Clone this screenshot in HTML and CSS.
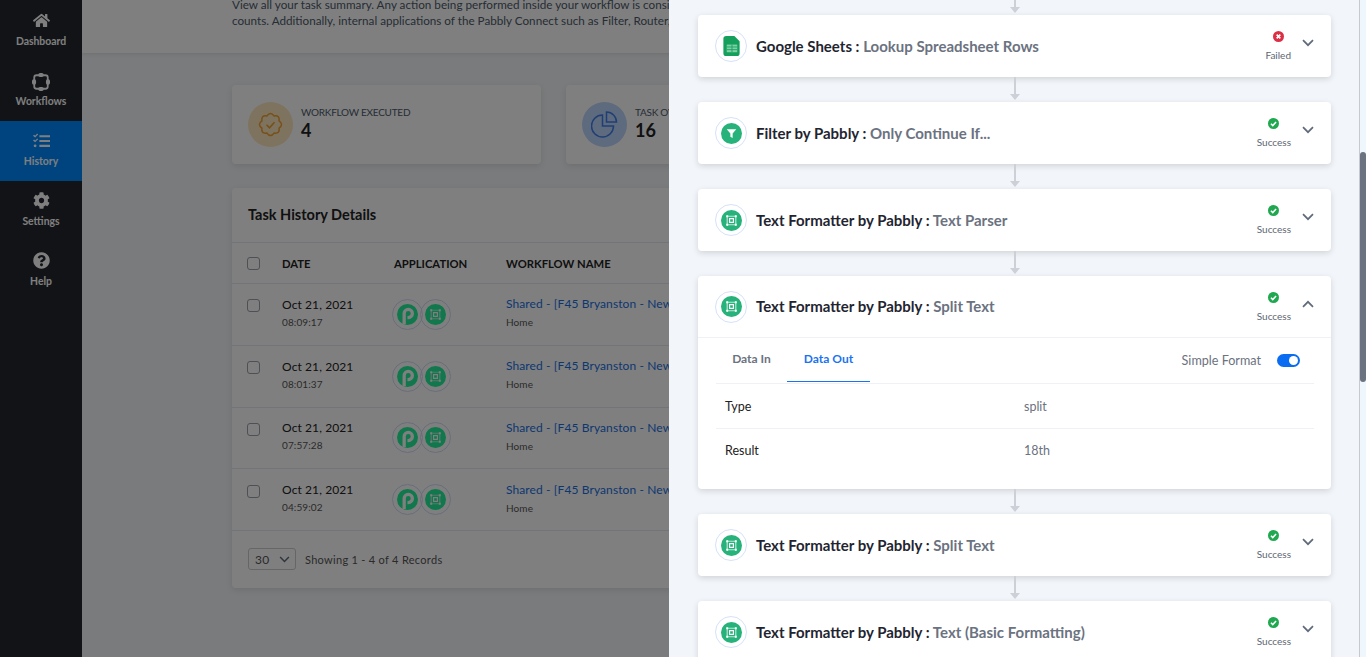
FILE: index.html
```html
<!DOCTYPE html>
<html lang="en">
<head>
  <meta charset="UTF-8">
  <title>Task History</title>
  <link rel="stylesheet" href="styles.css">
</head>
<body>
  <!-- shared icons -->
  <svg class="defs" width="0" height="0">
    <symbol id="i-formatter" viewBox="0 0 22 22">
      <circle cx="11" cy="11" r="11" fill="currentColor"/>
      <path d="M6.500 6.500h9v9h-9z" fill="none" stroke="#bfead8" stroke-width="1.200"/>
      <path d="M9 9h4v4H9z" fill="none" stroke="#fff" stroke-width="1.200"/>
      <path d="M5.500 5.500h2v2h-2zM14.500 5.500h2v2h-2zM5.500 14.500h2v2h-2zM14.500 14.500h2v2h-2z" fill="#fff"/>
    </symbol>
    <symbol id="i-pabbly" viewBox="0 0 22 22">
      <circle cx="11" cy="11" r="11" fill="currentColor"/>
      <path d="M7.500 21V10a4.300 4.300 0 1 1 4.300 4.300H11" fill="none" stroke="#fff" stroke-width="3.400"/>
    </symbol>
    <symbol id="i-arrow" viewBox="0 0 10 25">
      <path d="M4 0h2v18H4z" fill="#cdd1d7"/>
      <path d="M0 17h10l-5 6z" fill="#cdd1d7"/>
    </symbol>
    <symbol id="i-success" viewBox="0 0 12 12">
      <circle cx="6" cy="6" r="6" fill="#1fa850"/>
      <path d="M3.200 6.200l2 2 3.600-3.800" fill="none" stroke="#fff" stroke-width="1.700"/>
    </symbol>
    <symbol id="i-failed" viewBox="0 0 12 12">
      <circle cx="6" cy="6" r="6" fill="#dc2f45"/>
      <path d="M4 4l4 4M8 4l-4 4" fill="none" stroke="#fff" stroke-width="1.800"/>
    </symbol>
    <symbol id="i-chevron" viewBox="0 0 12 8">
      <path d="M1 1.200l5 5 5-5" fill="none" stroke="#5f6b7a" stroke-width="1.700"/>
    </symbol>
  </svg>

  <!-- sidebar -->
  <nav class="sidebar">
    <a class="nav-item">
      <svg class="nav-icon" viewBox="0 0 576 512"><path d="M280.37 148.26L96 300.11V464a16 16 0 0 0 16 16l112.06-.29a16 16 0 0 0 15.92-16V368a16 16 0 0 1 16-16h64a16 16 0 0 1 16 16v95.64a16 16 0 0 0 16 16.05L464 480a16 16 0 0 0 16-16V300L295.67 148.26a12.19 12.19 0 0 0-15.3 0zM571.6 251.47L488 182.56V44.05a12 12 0 0 0-12-12h-56a12 12 0 0 0-12 12v72.61L318.47 43a48 48 0 0 0-61 0L4.34 251.47a12 12 0 0 0-1.6 16.9l25.5 31A12 12 0 0 0 45.15 301l235.22-193.74a12.19 12.19 0 0 1 15.3 0L530.9 301a12 12 0 0 0 16.9-1.6l25.5-31a12 12 0 0 0-1.7-16.93z"/></svg>
      <span>Dashboard</span>
    </a>
    <a class="nav-item">
      <svg class="nav-icon large" viewBox="0 0 20 20"><rect x="2.500" y="2.500" width="15" height="15" rx="2.500" fill="none" stroke="currentColor" stroke-width="2"/><rect x="7" y="0" width="6" height="4.500" rx="2"/><rect x="7" y="15.500" width="6" height="4.500" rx="2"/><rect x="0" y="7" width="4.500" height="6" rx="2"/><rect x="15.500" y="7" width="4.500" height="6" rx="2"/></svg>
      <span>Workflows</span>
    </a>
    <a class="nav-item active">
      <svg class="nav-icon" viewBox="0 0 16 14"><path d="M6 2h10v2H6zM6 6.500h10v2H6zM6 11h10v2H6zM0 2.500l1-1 1 1L4 .5l.8.8L2 4.200zM0 7l1-1 1 1 2-2 .8.8L2 8.700z"/><circle cx="2" cy="12" r="1.300"/></svg>
      <span>History</span>
    </a>
    <a class="nav-item">
      <svg class="nav-icon" viewBox="0 0 512 512"><path d="M487.4 315.7l-42.6-24.6c4.3-23.2 4.3-47 0-70.2l42.6-24.6c4.9-2.8 7.1-8.6 5.5-14-11.1-35.6-30-67.8-54.7-94.6-3.8-4.1-10-5.1-14.8-2.3L380.8 110c-17.9-15.4-38.5-27.3-60.8-35.1V25.8c0-5.6-3.9-10.5-9.4-11.7-36.7-8.2-74.3-7.8-109.2 0-5.5 1.2-9.4 6.1-9.4 11.7V75c-22.2 7.9-42.8 19.8-60.8 35.1L88.7 85.5c-4.9-2.8-11-1.9-14.8 2.3-24.7 26.7-43.6 58.9-54.7 94.6-1.7 5.4.6 11.2 5.5 14L67.3 221c-4.3 23.2-4.3 47 0 70.2l-42.6 24.6c-4.9 2.8-7.1 8.6-5.5 14 11.1 35.6 30 67.8 54.7 94.6 3.8 4.1 10 5.1 14.8 2.3l42.6-24.6c17.9 15.4 38.5 27.3 60.8 35.1v49.2c0 5.6 3.9 10.5 9.4 11.7 36.7 8.2 74.3 7.8 109.2 0 5.5-1.2 9.4-6.1 9.4-11.7v-49.2c22.2-7.9 42.8-19.8 60.8-35.1l42.6 24.6c4.9 2.8 11 1.9 14.8-2.3 24.7-26.7 43.6-58.9 54.7-94.6 1.5-5.5-.7-11.3-5.6-14.1zM256 336c-44.1 0-80-35.9-80-80s35.9-80 80-80 80 35.9 80 80-35.9 80-80 80z"/></svg>
      <span>Settings</span>
    </a>
    <a class="nav-item">
      <svg class="nav-icon" viewBox="0 0 512 512"><path d="M504 256c0 136.997-111.043 248-248 248S8 392.997 8 256C8 119.083 119.043 8 256 8s248 111.083 248 248zM262.655 90c-54.497 0-89.255 22.957-116.549 63.758-3.536 5.286-2.353 12.415 2.715 16.258l34.699 26.31c5.205 3.947 12.621 3.008 16.665-2.122 17.864-22.658 30.113-35.797 57.303-35.797 20.429 0 45.698 13.148 45.698 32.958 0 14.976-12.363 22.667-32.534 33.976C247.128 238.528 216 254.941 216 296v4c0 6.627 5.373 12 12 12h56c6.627 0 12-5.373 12-12v-1.333c0-28.462 83.186-29.647 83.186-106.667 0-58.002-60.165-102-116.531-102zM256 338c-25.365 0-46 20.635-46 46 0 25.364 20.635 46 46 46s46-20.636 46-46c0-25.365-20.635-46-46-46z"/></svg>
      <span>Help</span>
    </a>
  </nav>

  <!-- page behind the drawer -->
  <main class="main">
    <header class="intro">
      <p>View all your task summary. Any action being performed inside your workflow is considered as a task and it</p>
      <p>counts. Additionally, internal applications of the Pabbly Connect such as Filter, Router, Delay are free.</p>
    </header>

    <section class="stats">
      <div class="stat-card">
        <div class="stat-icon amber">
          <svg width="25" height="25" viewBox="0 0 25 25" fill="none" stroke="#f0a030" stroke-width="1.500"><path d="M21.090 8.940Q26 12.500 21.090 16.060Q22.050 22.050 16.060 21.090Q12.500 26 8.940 21.090Q2.950 22.050 3.910 16.060Q-1 12.500 3.910 8.940Q2.950 2.950 8.940 3.910Q12.500 -1 16.060 3.910Q22.050 2.950 21.090 8.940z"/><path d="M8.500 12.800l3 3 5-5.500" stroke-width="1.600"/></svg>
        </div>
        <div>
          <div class="stat-label">WORKFLOW EXECUTED</div>
          <div class="stat-value">4</div>
        </div>
      </div>
      <div class="stat-card">
        <div class="stat-icon blue">
          <svg width="27" height="27" viewBox="0 0 27 27" fill="none" stroke="#3f7fe8" stroke-width="1.500"><path d="M11.500 4a11 11 0 1 0 11 11h-11z"/><path d="M15.500 1a10 10 0 0 1 10 10h-10z"/></svg>
        </div>
        <div>
          <div class="stat-label">TASK OVERVIEW</div>
          <div class="stat-value">16</div>
        </div>
      </div>
    </section>

    <section class="table-card">
      <h2 class="table-title">Task History Details</h2>
      <div class="row head">
        <span class="check"></span>
        <span>DATE</span>
        <span>APPLICATION</span>
        <span>WORKFLOW NAME</span>
      </div>
      <div class="row">
        <span class="check"></span>
        <div class="cell"><div class="date">Oct 21, 2021</div><div class="sub">08:09:17</div></div>
        <div class="apps">
          <span class="app"><svg><use href="#i-pabbly"/></svg></span><span class="app"><svg><use href="#i-formatter"/></svg></span>
        </div>
        <div class="cell"><div class="wf">Shared - [F45 Bryanston - New Member Onboarding]</div><div class="sub home">Home</div></div>
      </div>
      <div class="row">
        <span class="check"></span>
        <div class="cell"><div class="date">Oct 21, 2021</div><div class="sub">08:01:37</div></div>
        <div class="apps">
          <span class="app"><svg><use href="#i-pabbly"/></svg></span><span class="app"><svg><use href="#i-formatter"/></svg></span>
        </div>
        <div class="cell"><div class="wf">Shared - [F45 Bryanston - New Member Onboarding]</div><div class="sub home">Home</div></div>
      </div>
      <div class="row">
        <span class="check"></span>
        <div class="cell"><div class="date">Oct 21, 2021</div><div class="sub">07:57:28</div></div>
        <div class="apps">
          <span class="app"><svg><use href="#i-pabbly"/></svg></span><span class="app"><svg><use href="#i-formatter"/></svg></span>
        </div>
        <div class="cell"><div class="wf">Shared - [F45 Bryanston - New Member Onboarding]</div><div class="sub home">Home</div></div>
      </div>
      <div class="row">
        <span class="check"></span>
        <div class="cell"><div class="date">Oct 21, 2021</div><div class="sub">04:59:02</div></div>
        <div class="apps">
          <span class="app"><svg><use href="#i-pabbly"/></svg></span><span class="app"><svg><use href="#i-formatter"/></svg></span>
        </div>
        <div class="cell"><div class="wf">Shared - [F45 Bryanston - New Member Onboarding]</div><div class="sub home">Home</div></div>
      </div>
      <div class="table-foot">
        <div class="page-size"><span>30</span><svg width="11" height="7"><use href="#i-chevron"/></svg></div>
        <span>Showing 1 - 4 of 4 Records</span>
      </div>
    </section>
  </main>

  <div class="overlay"></div>

  <!-- task drawer -->
  <aside class="drawer">
    <svg class="arrow first"><use href="#i-arrow"/></svg>

    <div class="step">
      <div class="step-head">
        <span class="step-icon">
          <svg width="21" height="21" viewBox="0 0 22 22"><path d="M5.500 0H14l5.500 5.500V18a3 3 0 0 1-3 3h-11a3 3 0 0 1-3-3V3a3 3 0 0 1 3-3z" fill="#14a05c"/><path d="M6 9h11v8H6z" fill="#7fd0a6"/><path d="M6 11.500h11M6 14.300h11M11.500 9v8" stroke="#14a05c" stroke-width=".9"/></svg>
        </span>
        <div class="step-title">Google Sheets : <em>Lookup Spreadsheet Rows</em></div>
        <div class="status"><svg><use href="#i-failed"/></svg><span>Failed</span></div>
        <svg class="chevron"><use href="#i-chevron"/></svg>
      </div>
    </div>
    <svg class="arrow"><use href="#i-arrow"/></svg>

    <div class="step">
      <div class="step-head">
        <span class="step-icon">
          <svg width="21" height="21" viewBox="0 0 22 22"><circle cx="11" cy="11" r="11" fill="#26b27a"/><path d="M6 6.500h10l-3.800 4.500v4.800l-2.400-1.400V11z" fill="#fff"/></svg>
        </span>
        <div class="step-title">Filter by Pabbly : <em>Only Continue If...</em></div>
        <div class="status"><svg><use href="#i-success"/></svg><span>Success</span></div>
        <svg class="chevron"><use href="#i-chevron"/></svg>
      </div>
    </div>
    <svg class="arrow"><use href="#i-arrow"/></svg>

    <div class="step">
      <div class="step-head">
        <span class="step-icon"><svg width="21" height="21"><use href="#i-formatter"/></svg></span>
        <div class="step-title">Text Formatter by Pabbly : <em>Text Parser</em></div>
        <div class="status"><svg><use href="#i-success"/></svg><span>Success</span></div>
        <svg class="chevron"><use href="#i-chevron"/></svg>
      </div>
    </div>
    <svg class="arrow"><use href="#i-arrow"/></svg>

    <div class="step">
      <div class="step-head open">
        <span class="step-icon"><svg width="21" height="21"><use href="#i-formatter"/></svg></span>
        <div class="step-title">Text Formatter by Pabbly : <em>Split Text</em></div>
        <div class="status"><svg><use href="#i-success"/></svg><span>Success</span></div>
        <svg class="chevron up"><use href="#i-chevron"/></svg>
      </div>
      <div class="step-body">
        <div class="tabs">
          <a class="tab">Data In</a>
          <a class="tab current">Data Out</a>
          <div class="format">
            <span class="format-label">Simple Format</span>
            <span class="toggle"></span>
          </div>
        </div>
        <div class="data-row"><span>Type</span><span class="val">split</span></div>
        <div class="data-row"><span>Result</span><span class="val">18th</span></div>
      </div>
    </div>
    <svg class="arrow"><use href="#i-arrow"/></svg>

    <div class="step">
      <div class="step-head">
        <span class="step-icon"><svg width="21" height="21"><use href="#i-formatter"/></svg></span>
        <div class="step-title">Text Formatter by Pabbly : <em>Split Text</em></div>
        <div class="status"><svg><use href="#i-success"/></svg><span>Success</span></div>
        <svg class="chevron"><use href="#i-chevron"/></svg>
      </div>
    </div>
    <svg class="arrow"><use href="#i-arrow"/></svg>

    <div class="step">
      <div class="step-head">
        <span class="step-icon"><svg width="21" height="21"><use href="#i-formatter"/></svg></span>
        <div class="step-title">Text Formatter by Pabbly : <em>Text (Basic Formatting)</em></div>
        <div class="status"><svg><use href="#i-success"/></svg><span>Success</span></div>
        <svg class="chevron"><use href="#i-chevron"/></svg>
      </div>
    </div>

    <div class="scroll-track"><div class="scroll-thumb"></div></div>
  </aside>
</body>
</html>
```

FILE: styles.css
```css
* {
  box-sizing: border-box;
}
html, body {
  height: 100%;
}
body {
  margin: 0;
  overflow: hidden;
  font-family: Lato, "Open Sans", sans-serif;
  font-size: 13px;
  color: #222;
  background: #f3f6fa;
}
.defs {
  position: absolute;
}

/* sidebar */
.sidebar {
  position: fixed;
  top: 0;
  left: 0;
  bottom: 0;
  width: 82px;
  padding-top: 1px;
  background: #23262c;
}
.nav-item {
  height: 60px;
  display: flex;
  flex-direction: column;
  align-items: center;
  padding-top: 11px;
  color: #fff;
  font-size: 10.4px;
  font-weight: 700;
}
.nav-item.active {
  background: #0188ff;
}
.nav-icon {
  width: 17px;
  height: 17px;
  margin-bottom: 6px;
  fill: currentColor;
}
.nav-icon.large {
  width: 18px;
  height: 18px;
  margin-top: 1px;
  margin-bottom: 4px;
}

/* page behind */
.main {
  margin-left: 82px;
}
.intro {
  height: 53px;
  padding: 0 150px;
  background: #fff;
  color: #4d5a6b;
  font-size: 11.7px;
  box-shadow: 0 1px 4px rgba(0, 0, 0, .1);
  white-space: nowrap;
  overflow: hidden;
}
.intro p {
  margin: 0;
  line-height: 16px;
  position: relative;
  top: -4px;
}
.stats {
  display: flex;
  gap: 25px;
  padding: 32px 150px 0;
}
.stat-card {
  width: 309px;
  height: 79px;
  display: flex;
  align-items: center;
  gap: 8px;
  padding: 0 16px;
  background: #fff;
  border-radius: 4px;
  box-shadow: 0 2px 6px rgba(0, 0, 0, .1);
}
.stat-icon {
  width: 45px;
  height: 45px;
  border-radius: 50%;
  display: flex;
  align-items: center;
  justify-content: center;
}
.stat-icon.amber {
  background: #fbe6bd;
}
.stat-icon.blue {
  background: #bdd4fb;
}
.stat-label {
  font-size: 10px;
  letter-spacing: -.25px;
  color: #4d5a6b;
  line-height: 14px;
  margin-top: -3px;
}
.stat-value {
  font-size: 18px;
  font-weight: 700;
  line-height: 22px;
  margin-bottom: 1px;
}
.table-card {
  margin: 24px 150px 0;
  height: 400px;
  background: #fff;
  border-radius: 4px;
  box-shadow: 0 2px 6px rgba(0, 0, 0, .1);
}
.table-title {
  margin: 0;
  height: 54px;
  padding: 0 16px;
  line-height: 54px;
  font-size: 14.5px;
  font-weight: 700;
}
.row {
  height: 61.75px;
  display: grid;
  grid-template-columns: 35px 112px 112px 1fr;
  align-items: center;
  padding-left: 15px;
  border-top: 1px solid #e3e9f2;
  white-space: nowrap;
}
.row.head {
  height: 41px;
  font-size: 11.25px;
  font-weight: 700;
}
.check {
  width: 13px;
  height: 13px;
  margin-bottom: 17px;
  border: 1px solid #9aa0a8;
  border-radius: 3px;
}
.row.head .check {
  margin-bottom: 0;
}
.cell {
  padding-bottom: 4px;
  font-size: 12px;
  letter-spacing: .1px;
}
.date {
  color: #222;
}
.sub {
  margin-top: 4px;
  font-size: 10px;
  color: #555;
}
.sub.home {
  margin-top: 5px;
}
.wf {
  color: #1a6fe0;
}
.apps {
  display: flex;
  color: #22f09c;
}
.app {
  width: 31px;
  height: 31px;
  margin-left: -3px;
  padding: 4px;
  border: 1px solid #cfdcf5;
  border-radius: 50%;
}
.app:first-child {
  margin-left: -2px;
}
.app svg {
  display: block;
  width: 21px;
  height: 21px;
}
.table-foot {
  display: flex;
  align-items: center;
  gap: 9px;
  padding: 17px 16px;
  border-top: 1px solid #e3e9f2;
  font-size: 11px;
  color: #555;
  letter-spacing: .3px;
}
.page-size {
  width: 48px;
  height: 22px;
  display: flex;
  align-items: center;
  justify-content: space-between;
  padding: 0 5px 0 6px;
  border: 1px solid #ccc;
  border-radius: 3px;
  font-size: 12px;
}

.overlay {
  position: fixed;
  top: 0;
  left: 0;
  bottom: 0;
  width: 669px;
  background: rgba(0, 0, 0, .5);
}

/* drawer */
.drawer {
  position: fixed;
  top: 0;
  right: 0;
  bottom: 0;
  width: 697px;
  padding: 0 35px 0 29px;
  overflow: hidden;
  background: #f2f5f9;
}
.arrow {
  display: block;
  width: 10px;
  height: 25px;
  margin: 0 auto;
}
.arrow.first {
  margin-top: -10px;
}
.step {
  background: #fff;
  border-radius: 4px;
  box-shadow: 0 2px 6px rgba(0, 0, 0, .14);
}
.step-head {
  height: 62px;
  display: flex;
  align-items: center;
  padding: 0 17px 0 18px;
}
.step-head.open {
  border-bottom: 1px solid #eef2f7;
}
.step-icon {
  flex: none;
  width: 32px;
  height: 32px;
  margin: 0 8px 0 -1px;
  display: flex;
  align-items: center;
  justify-content: center;
  color: #26b27a;
  border: 1px solid #d5e2fa;
  border-radius: 50%;
}
.step-title {
  flex: 1;
  padding: 0 0 1px 1px;
  font-size: 15px;
  font-weight: 700;
  color: #1f2530;
}
.step-title em {
  font-style: normal;
  color: #6b7280;
}
.status {
  display: flex;
  flex-direction: column;
  align-items: center;
  gap: 7px;
  margin-right: 11px;
  font-size: 10px;
  color: #5d6672;
}
.status svg {
  width: 11px;
  height: 11px;
}
.chevron {
  width: 12px;
  height: 8px;
  margin-bottom: 6px;
}
.chevron.up {
  transform: rotate(180deg);
}
.step-body {
  padding: 0 17px 17px 18px;
}
.tabs {
  height: 46px;
  display: flex;
  align-items: stretch;
  border-bottom: 1px solid #eef2f7;
}
.tab {
  width: 71px;
  line-height: 42px;
  text-align: center;
  font-size: 12px;
  font-weight: 700;
  color: #6b7280;
}
.tab.current {
  width: 83px;
  height: 44px;
  color: #1a73f0;
  border-bottom: 1px solid #1a73f0;
}
.format {
  margin-left: auto;
  display: flex;
  align-items: center;
  gap: 16px;
  padding-right: 14px;
  color: #6b7280;
  font-size: 12.6px;
}
.format-label {
  margin-bottom: 1px;
}
.toggle {
  position: relative;
  width: 23px;
  height: 13px;
  border-radius: 7px;
  background: #0a6cf0;
}
.toggle::after {
  content: "";
  position: absolute;
  top: 2px;
  right: 2px;
  width: 9px;
  height: 9px;
  border-radius: 50%;
  background: #fff;
}
.data-row {
  height: 45px;
  display: grid;
  grid-template-columns: 299px 1fr;
  align-items: center;
  padding-left: 9px;
  border-bottom: 1px solid #eef2f7;
  font-size: 12.5px;
}
.data-row:last-child {
  height: 43px;
  border-bottom: none;
}
.val {
  color: #6b7280;
}

/* scrollbar of the drawer */
.scroll-track {
  position: absolute;
  top: 0;
  right: 0;
  bottom: 0;
  width: 7px;
  border-left: 1px solid #c6cacf;
  background: #f0f7fc;
}
.scroll-thumb {
  margin-top: 152px;
  height: 230px;
  border-radius: 3px;
  background: #6b7280;
}
```
